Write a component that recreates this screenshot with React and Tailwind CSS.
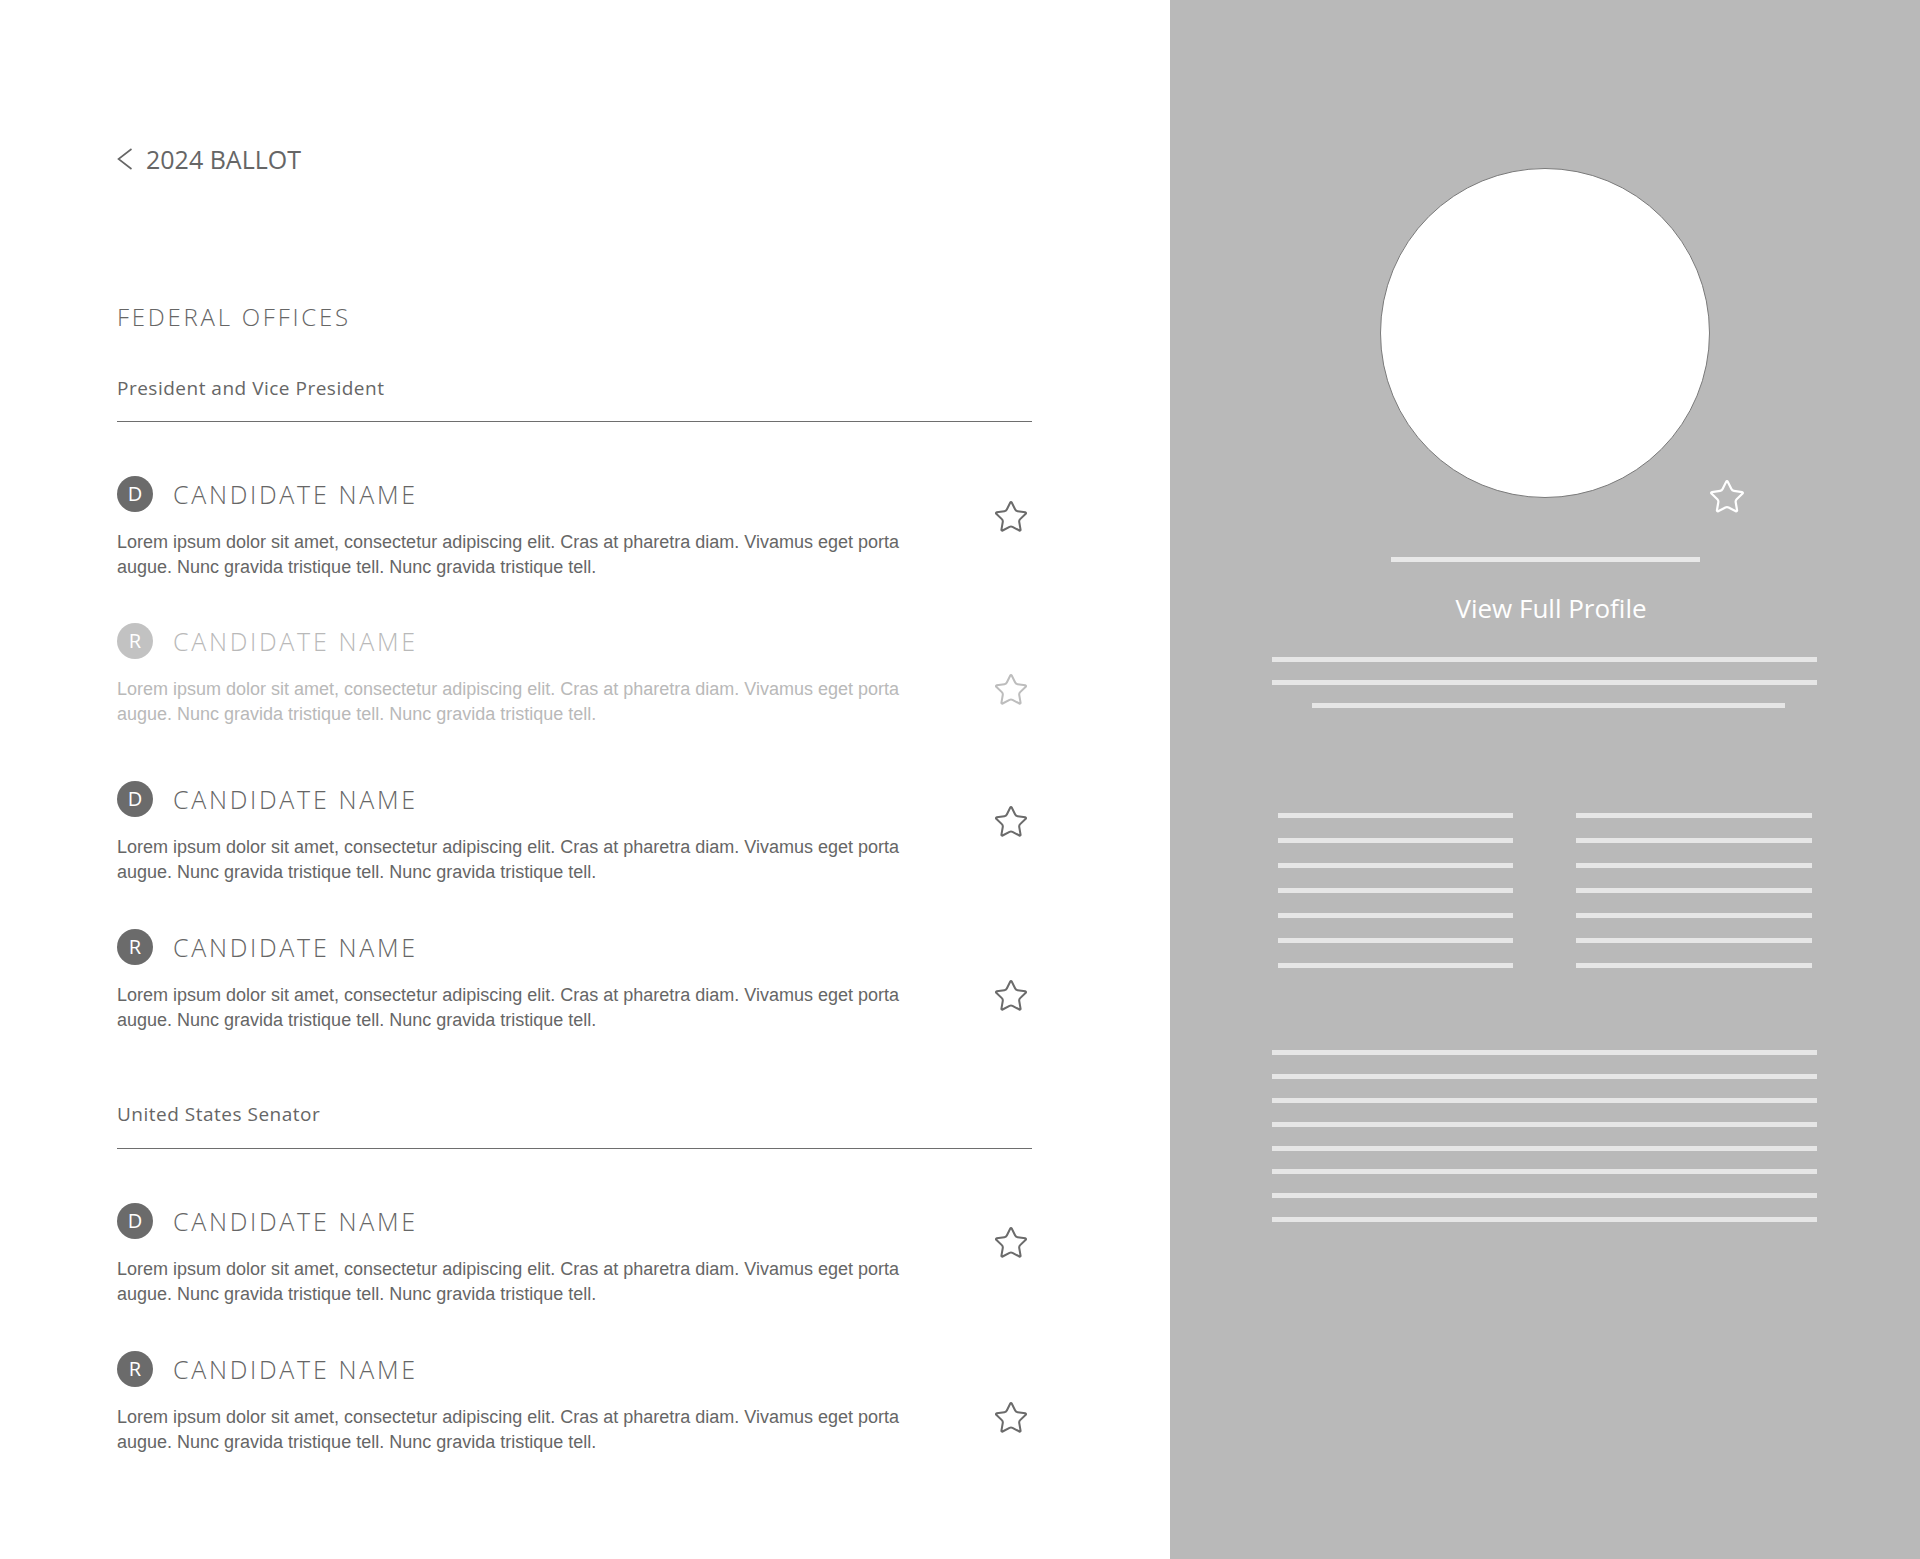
import React from "react";

const HEAD = { fontFamily: '"Open Sans", "Noto Sans", sans-serif' };
const BODY = { fontFamily: '"Liberation Sans", Arial, sans-serif' };

function StarIcon({ color = "#6b6b6b", size = 36, sw = 1.35 }) {
  return (
    <svg width={size} height={size} viewBox="0 0 24 24" fill="none" stroke={color} strokeWidth={sw} strokeLinecap="round" strokeLinejoin="round">
      <path d="M11.525 2.295a.53.53 0 0 1 .95 0l2.31 4.679a2.123 2.123 0 0 0 1.595 1.16l5.166.756a.53.53 0 0 1 .294.904l-3.736 3.638a2.123 2.123 0 0 0-.611 1.878l.882 5.14a.53.53 0 0 1-.771.56l-4.618-2.428a2.122 2.122 0 0 0-1.973 0L6.396 21.01a.53.53 0 0 1-.77-.56l.881-5.139a2.122 2.122 0 0 0-.611-1.879L2.16 9.795a.53.53 0 0 1 .294-.906l5.165-.755a2.122 2.122 0 0 0 1.597-1.16z" />
    </svg>
  );
}

function Candidate({ party, faded, low, className }) {
  const text = faded ? "text-[#b9b9b9]" : "text-[#666666]";
  const badge = faded ? "bg-[#c2c2c2]" : "bg-[#6b6b6b]";
  return (
    <div className={"flex " + className}>
      <div className="w-[876px]">
        <div className="flex items-center gap-[20px] h-[36px]">
          <div className={"w-[36px] h-[36px] rounded-full flex items-center justify-center text-white text-[20px] " + badge} style={HEAD}>
            {party}
          </div>
          <div className={"text-[25px] leading-[32px] font-light tracking-[2.7px] " + text} style={HEAD}>
            CANDIDATE NAME
          </div>
        </div>
        <p className={"mt-[18px] text-[18px] leading-[25px] whitespace-nowrap " + text} style={BODY}>
          Lorem ipsum dolor sit amet, consectetur adipiscing elit. Cras at pharetra diam. Vivamus eget porta
          <br />
          augue. Nunc gravida tristique tell. Nunc gravida tristique tell.
        </p>
      </div>
      <div className={low ? "pt-[49px]" : "pt-[22.5px]"}>
        <StarIcon color={faded ? "#bdbdbd" : "#6b6b6b"} />
      </div>
    </div>
  );
}

function Bar({ className }) {
  return <div className={"h-[5px] bg-[#e6e6e6] " + className} />;
}

export default function App() {
  const seven = [0, 1, 2, 3, 4, 5, 6];
  const eight = [0, 1, 2, 3, 4, 5, 6, 7];
  return (
    <div className="flex w-[1920px] h-[1559px] bg-white">
      {/* Left column */}
      <div className="w-[1170px] pl-[117px] pt-[143px]">
        <div className="flex items-center h-[32px] gap-[13px] text-[#666666]">
          <svg width="16" height="22" viewBox="0 0 16 22" fill="none" stroke="#666666" strokeWidth="1.6">
            <polyline points="14.5,1 1.5,11 14.5,21" />
          </svg>
          <span className="text-[25px] leading-[32px]" style={HEAD}>2024 BALLOT</span>
        </div>

        <div className="mt-[126px] text-[24px] leading-[32px] font-light tracking-[2.75px] text-[#666666]" style={HEAD}>
          FEDERAL OFFICES
        </div>
        <div className="mt-[43px] text-[19px] leading-[24px] text-[#666666] tracking-[0.5px]" style={HEAD}>
          President and Vice President
        </div>
        <div className="mt-[21px] h-px w-[915px] bg-[#6e6e6e]" />

        <Candidate party="D" className="mt-[54px]" />
        <Candidate party="R" faded low className="mt-[43px]" />
        <Candidate party="D" className="mt-[54px]" />
        <Candidate party="R" low className="mt-[43.5px]" />

        <div className="mt-[69px] text-[19px] leading-[24px] text-[#666666] tracking-[0.5px]" style={HEAD}>
          United States Senator
        </div>
        <div className="mt-[22px] h-px w-[915px] bg-[#6e6e6e]" />

        <Candidate party="D" className="mt-[54px]" />
        <Candidate party="R" low className="mt-[44.5px]" />
      </div>

      {/* Right panel */}
      <div className="w-[750px] bg-[#b9b9b9] flex flex-col items-center pt-[168px]">
        <div className="relative w-[330px] h-[330px]">
          <div className="w-[330px] h-[330px] rounded-full bg-white border border-[#7a7a7a]" />
          <div className="absolute left-[328px] top-[310px]">
            <StarIcon color="#ffffff" size={38} sw={1.4} />
          </div>
        </div>
        <div className="mt-[59px] h-[5px] w-[309px] bg-[#e8e8e8]" />
        <div className="mt-[29px] ml-[12px] text-[26px] leading-[34px] text-white" style={HEAD}>
          View Full Profile
        </div>

        <div className="self-start ml-[102px] w-[545px] mt-[32px] flex flex-col">
          <div className="flex flex-col gap-[18px]">
            <Bar className="w-[545px]" />
            <Bar className="w-[545px]" />
            <Bar className="w-[473px] ml-[40px]" />
          </div>

          <div className="mt-[105px] flex gap-[63px] pl-[6px]">
            <div className="flex flex-col gap-[20px] w-[235px]">
              {seven.map((i) => (
                <Bar key={i} className="w-[235px]" />
              ))}
            </div>
            <div className="flex flex-col gap-[20px] w-[236px]">
              {seven.map((i) => (
                <Bar key={i} className="w-[236px]" />
              ))}
            </div>
          </div>

          <div className="mt-[82px] flex flex-col gap-[18.9px]">
            {eight.map((i) => (
              <Bar key={i} className="w-[545px]" />
            ))}
          </div>
        </div>
      </div>
    </div>
  );
}
